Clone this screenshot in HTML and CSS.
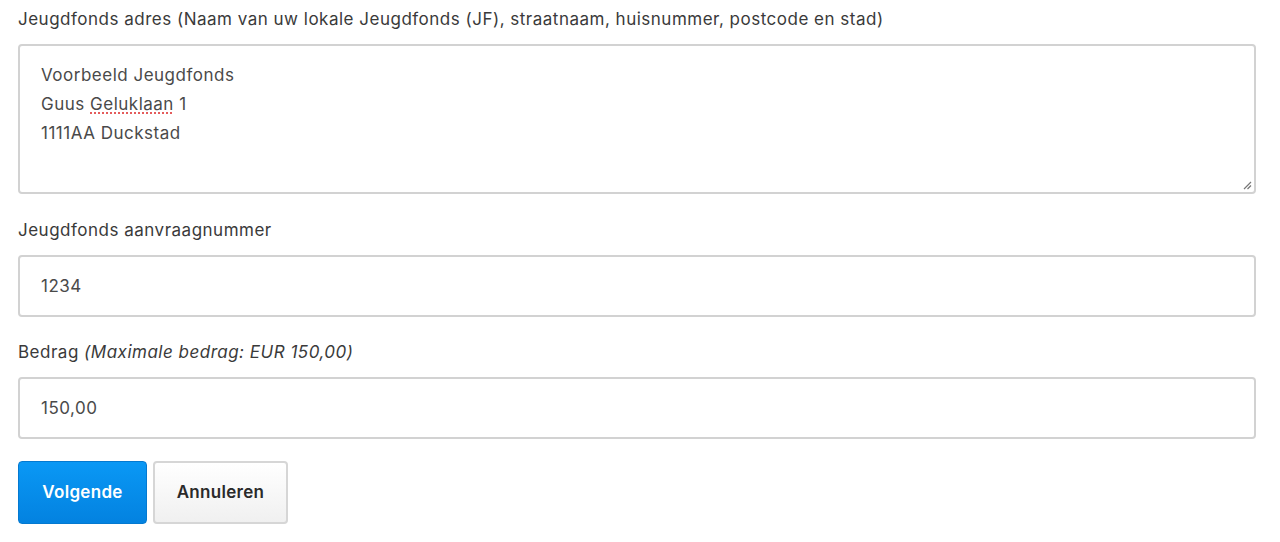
FILE: index.html
```html
<!DOCTYPE html>
<html lang="nl">
<head>
<meta charset="utf-8">
<title>Jeugdfonds</title>
<link rel="stylesheet" href="styles.css">
</head>
<body>
<form class="form">
  <div class="group">
    <label class="label" for="adres">Jeugdfonds adres (Naam van uw lokale Jeugdfonds (JF), straatnaam, huisnummer, postcode en stad)</label>
    <div class="field textarea" id="adres">
      <div>Voorbeeld Jeugdfonds</div>
      <div>Guus <span class="spell">Geluklaan</span> 1</div>
      <div>1111AA Duckstad</div>
      <svg class="grip" width="10" height="10" viewBox="0 0 10 10"><path d="M9 2 L2 9 M9 5.5 L5.5 9" stroke="#777" stroke-width="1.2" fill="none"/></svg>
    </div>
  </div>
  <div class="group">
    <label class="label" for="nr">Jeugdfonds aanvraagnummer</label>
    <div class="field input" id="nr">1234</div>
  </div>
  <div class="group">
    <label class="label" for="bedrag">Bedrag <em class="hint">(Maximale bedrag: EUR 150,00)</em></label>
    <div class="field input" id="bedrag">150,00</div>
  </div>
  <div class="actions">
    <button type="button" class="btn btn-primary">Volgende</button>
    <button type="button" class="btn btn-default">Annuleren</button>
  </div>
</form>
</body>
</html>
```

FILE: styles.css
```css
html, body {
  margin: 0;
  padding: 0;
  background: #ffffff;
}
body {
  font-family: "Inter", "Open Sans", "Liberation Sans", sans-serif;
  font-size: 17px;
  letter-spacing: 0.5px;
  color: #444;
}
.form {
  padding: 8px 24px 0 18px;
}
.group {
  margin-bottom: 24.5px;
}
.label {
  display: block;
  line-height: 22px;
  margin-bottom: 14px;
  color: #3a3a3a;
}
.hint {
  font-style: italic;
}
.field {
  box-sizing: border-box;
  border: 2px solid #d2d2d2;
  border-radius: 4px;
  background: #fff;
  color: #4a4a4a;
  padding: 0 21px;
}
.textarea {
  position: relative;
  height: 150px;
  padding-top: 15px;
  line-height: 29px;
}
.spell {
  text-decoration: underline dotted #e04040;
  text-underline-offset: 3px;
}
.grip {
  position: absolute;
  right: 2px;
  bottom: 2px;
}
.input {
  height: 62px;
  display: flex;
  align-items: center;
}
.actions {
  display: flex;
  gap: 6px;
  margin-top: -3px;
}
.btn {
  box-sizing: border-box;
  height: 63px;
  border-radius: 4px;
  font-family: inherit;
  font-size: 17px;
  letter-spacing: 0.3px;
  font-weight: 600;
  cursor: pointer;
}
.btn-primary {
  width: 129px;
  background: linear-gradient(#0a98f5, #0382e0);
  border: 1px solid #0479d0;
  color: #fff;
}
.btn-default {
  width: 135px;
  background: linear-gradient(#ffffff, #f0f0f0);
  border: 2px solid #d6d6d6;
  color: #2a2a2a;
}
```
